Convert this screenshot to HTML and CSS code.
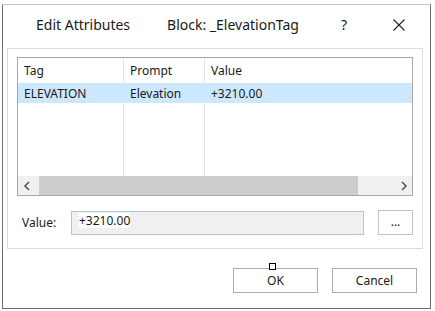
FILE: index.html
```html
<!DOCTYPE html>
<html>
<head>
  <title>Edit Attributes</title>
  <meta name="viewport" content="width=device-width, initial-scale=1.0">
  <link rel="stylesheet" href="styles.css">
</head>
<body>
  <div class="dialog">
    <div class="title-bar">
      <span class="title">Edit Attributes</span>
      <span class="block-name">Block: _ElevationTag</span>
      <span class="help">?</span>
      <svg class="close" width="12" height="12" viewBox="0 0 12 12">
        <path d="M0.5 0.5 L11.5 11.5 M11.5 0.5 L0.5 11.5" stroke="#222" stroke-width="1.1" fill="none"/>
      </svg>
    </div>

    <div class="group">
      <div class="list">
        <div class="list-body">
          <div class="row header">
            <div class="cell col-tag">Tag</div>
            <div class="cell col-prompt">Prompt</div>
            <div class="cell col-value">Value</div>
          </div>
          <div class="row selected">
            <div class="cell col-tag">ELEVATION</div>
            <div class="cell col-prompt">Elevation</div>
            <div class="cell col-value">+3210.00</div>
          </div>
          <div class="row filler">
            <div class="cell col-tag"></div>
            <div class="cell col-prompt"></div>
            <div class="cell col-value"></div>
          </div>
        </div>
        <div class="hscroll">
          <div class="arrow">
            <svg width="8" height="10" viewBox="0 0 8 10"><path d="M6 1 L2 5 L6 9" stroke="#555" stroke-width="1.6" fill="none"/></svg>
          </div>
          <div class="track"><div class="thumb"></div></div>
          <div class="arrow">
            <svg width="8" height="10" viewBox="0 0 8 10"><path d="M2 1 L6 5 L2 9" stroke="#555" stroke-width="1.6" fill="none"/></svg>
          </div>
        </div>
      </div>

      <div class="value-row">
        <label for="valueField">Value:</label>
        <div class="field" id="valueField"><span class="field-text">+3210.00</span></div>
        <button class="dots">...</button>
      </div>
    </div>

    <div class="buttons">
      <div class="ok-wrap">
        <span class="grip"></span>
        <button class="btn">OK</button>
      </div>
      <button class="btn">Cancel</button>
    </div>
  </div>
</body>
</html>
```

FILE: styles.css
```css
body {
  margin: 0;
  background-color: #fff;
  font-family: "Noto Sans", "Open Sans", sans-serif;
  font-size: 12px;
  color: #1a1a1a;
}

.dialog {
  margin: 4px 0 0 2px;
  width: 427px;
  height: 303px;
  border: 1px solid #6e6e6e;
  border-top-color: #c8c8c8;
  background-color: #fff;
  display: flex;
  flex-direction: column;
}

.title-bar {
  height: 43px;
  box-sizing: border-box;
  padding-bottom: 4px;
  display: flex;
  align-items: center;
  font-size: 14px;
  color: #1a1a1a;
}

.title {
  margin-left: 33px;
}

.block-name {
  margin-left: 37px;
}

.help {
  margin-left: 42px;
}

.close {
  margin-left: 46px;
}

/* group box */
.group {
  margin-left: 4px;
  width: 416px;
  height: 201px;
  border: 1px solid #dcdcdc;
  padding: 8px 9px 0 9px;
  box-sizing: border-box;
}

.list {
  height: 137px;
  border: 1px solid #a8a8a8;
  display: flex;
  flex-direction: column;
}

.list-body {
  flex: 1;
  display: flex;
  flex-direction: column;
}

.row {
  display: flex;
}

.row.header {
  height: 25px;
  align-items: center;
}

.row.selected {
  height: 20px;
  align-items: center;
  background-color: #cce8ff;
}

.row.filler {
  flex: 1;
}

.cell {
  padding-left: 6px;
  box-sizing: border-box;
  white-space: nowrap;
}

.col-tag {
  width: 106px;
}

.col-prompt {
  width: 81px;
}

.col-value {
  flex: 1;
}

.header .col-tag, .header .col-prompt,
.filler .col-tag, .filler .col-prompt {
  border-right: 1px solid #e5e5e5;
  align-self: stretch;
  display: flex;
  align-items: center;
}

.selected .col-tag, .selected .col-prompt {
  border-right: 1px solid transparent;
}

.hscroll {
  height: 19px;
  display: flex;
  background-color: #f0f0f0;
}

.hscroll .arrow {
  width: 17px;
  display: flex;
  align-items: center;
  justify-content: center;
}

.track {
  flex: 1;
  display: flex;
  align-items: stretch;
  padding-right: 37px;
}

.thumb {
  flex: 1;
  background-color: #cdcdcd;
  margin-left: 4px;
}

.value-row {
  display: flex;
  align-items: center;
  margin-top: 14px;
}

.value-row label {
  margin-left: 5px;
  width: 49px;
}

.field {
  width: 291px;
  height: 22px;
  border: 1px solid #b5c3d6;
  background-color: #f0f0f0;
  position: relative;
}

.field-text {
  position: absolute;
  left: 7px;
  top: 1px;
  background-color: #fff;
  line-height: 15px;
}

.dots {
  margin-left: 14px;
  width: 35px;
  height: 25px;
  border: 1px solid #c2c2c2;
  background-color: #fff;
  font-family: inherit;
  font-size: 12px;
  padding: 0 0 2px 0;
  color: #1a1a1a;
}

.buttons {
  display: flex;
  justify-content: flex-end;
  margin-top: 19px;
  padding-right: 13px;
  gap: 14px;
}

.ok-wrap {
  position: relative;
}

.grip {
  position: absolute;
  left: 36px;
  top: -5px;
  width: 5px;
  height: 5px;
  border: 1px solid #000;
  background-color: #fff;
}

.btn {
  width: 85px;
  height: 25px;
  border: 1px solid #adadad;
  background-color: #fff;
  font-family: inherit;
  font-size: 12px;
  color: #1a1a1a;
  padding: 0;
  display: block;
}
```
